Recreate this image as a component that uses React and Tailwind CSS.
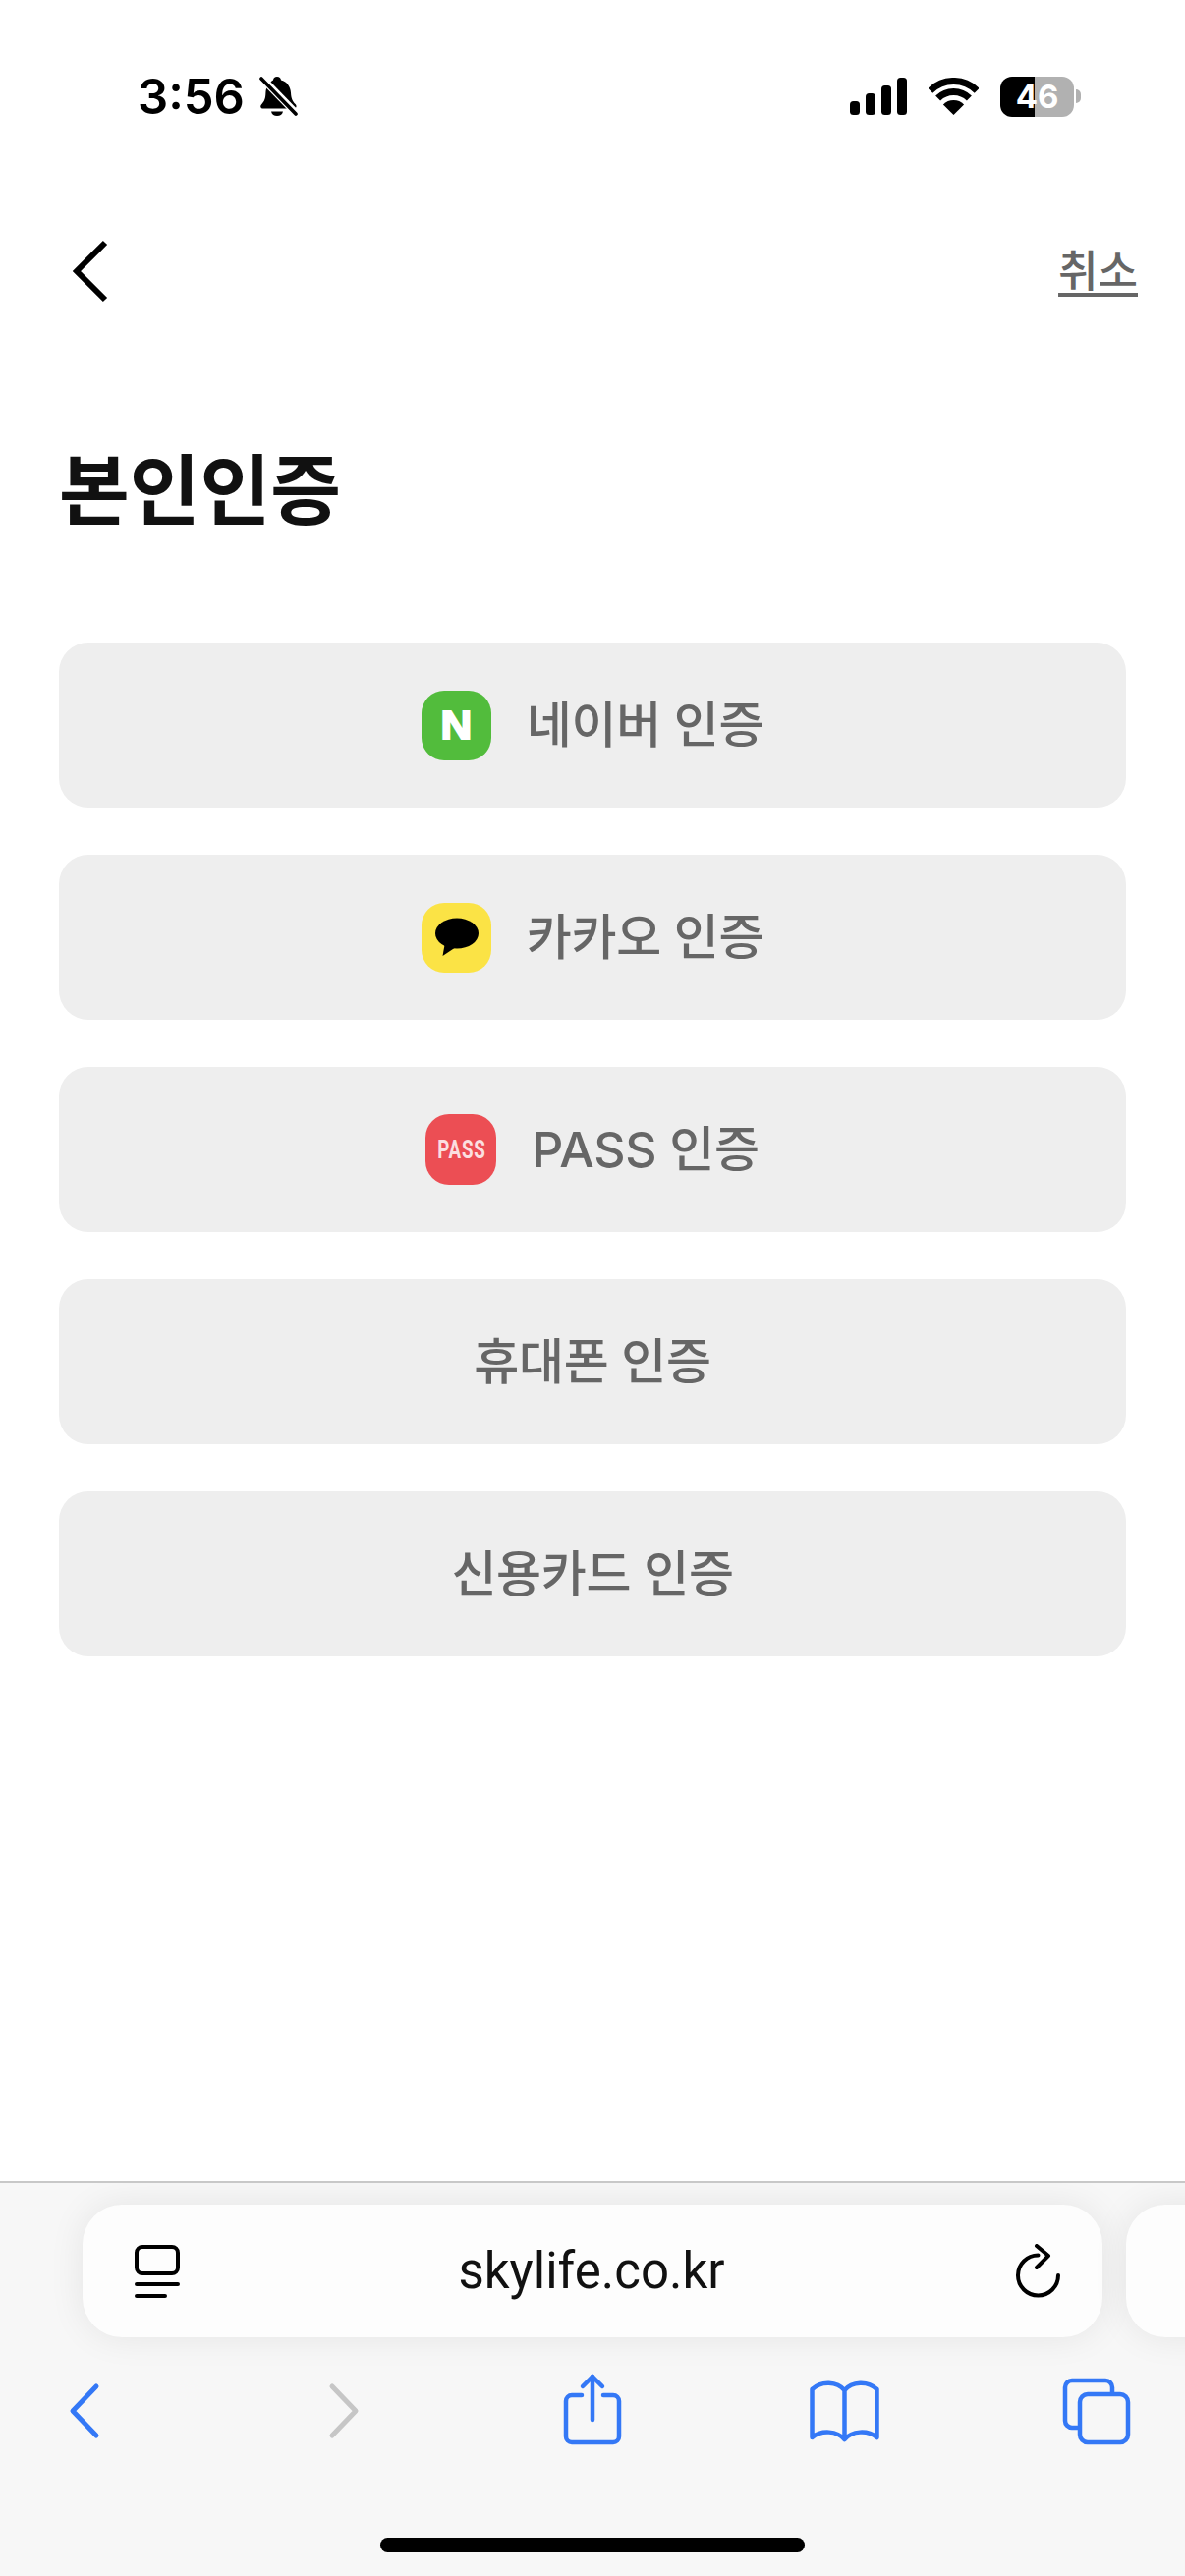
import React from 'react';

const FONT = 'font-["Inter","Noto_Sans_CJK_KR",sans-serif]';

function BellOff() {
  return (
    <svg width="40" height="42" viewBox="0 0 40 42">
      <path
        d="M18 1c2.400 0 3.800 1.600 4 3.400 6 1.600 9.600 6.400 10 13 .3 5.600 1.600 8.600 4.600 11.600 1.800 1.800 1 4.600-1.600 4.600H4c-2.800 0-3.600-2.600-1.800-4.400 3-3 4-6 4.200-11.400.1-2.800.6-5 1.700-7C9.800 8 12 5.600 14 4.400 14.200 2.600 15.600 1 18 1z"
        fill="#000"
      />
      <path d="M12 36.500h12c-.6 3-3 4.500-6 4.500s-5.400-1.500-6-4.500z" fill="#000" />
      <path d="M1 1l38 39" stroke="#fff" strokeWidth="7.500" />
      <path d="M2 3l35 36" stroke="#000" strokeWidth="3.600" strokeLinecap="round" />
    </svg>
  );
}

function Signal() {
  return (
    <svg width="58" height="38" viewBox="0 0 58 38" fill="#000">
      <rect x="0" y="24" width="10" height="14" rx="3.500" />
      <rect x="16" y="16" width="10" height="22" rx="3.500" />
      <rect x="32" y="8" width="10" height="30" rx="3.500" />
      <rect x="48" y="0" width="10" height="38" rx="3.500" />
    </svg>
  );
}

function Wifi() {
  return (
    <svg width="51" height="38" viewBox="0 0 51 38" fill="none" stroke="#000" strokeWidth="7">
      <path d="M1.800 13.300A33.500 33.500 0 0 1 49.200 13.300" />
      <path d="M9.600 21.100A22.500 22.500 0 0 1 41.400 21.100" />
      <path d="M25.500 38L14.900 27.400A15 15 0 0 1 36.100 27.400Z" fill="#000" stroke="none" />
    </svg>
  );
}

function StatusBar() {
  return (
    <div className="flex h-[196px] items-center justify-between pl-[140px] pr-[106px]">
      <div className="flex items-center gap-[15px]">
        <span className="text-[49px] leading-none font-semibold text-black">3:56</span>
        <BellOff />
      </div>
      <div className="flex items-center">
        <Signal />
        <div className="ml-[22px]">
          <Wifi />
        </div>
        <div className="ml-[22px] flex h-[41px] w-[75px] items-center justify-center rounded-[12px] bg-[linear-gradient(90deg,#000_47%,#b1b1b1_47%)] text-[33px] leading-none font-bold text-white">
          46
        </div>
        <div className="ml-[2px] h-[14px] w-[5px] rounded-r-full bg-[#b1b1b1]" />
      </div>
    </div>
  );
}

function NaverLogo() {
  return (
    <div className="flex h-[71px] w-[71px] items-center justify-center rounded-[23px] bg-[#52bc3c]">
      <span className="scale-x-110 font-['Liberation_Sans',sans-serif] text-[40px] leading-none font-bold text-white [-webkit-text-stroke:2px_white]">
        N
      </span>
    </div>
  );
}

function KakaoLogo() {
  return (
    <svg width="71" height="71" viewBox="0 0 71 71">
      <rect width="71" height="71" rx="23" fill="#fbe345" />
      <ellipse cx="36" cy="31" rx="22" ry="15.500" fill="#000" />
      <path d="M24 40L21.500 54L35 45Z" fill="#000" />
    </svg>
  );
}

function PassLogo() {
  return (
    <div className="flex h-[72px] w-[72px] items-center justify-center rounded-[24px] bg-[#ec4e54]">
      <span className="scale-x-75 font-['Roboto',sans-serif] text-[25px] leading-none font-bold tracking-[1px] text-[#fbdfe0]">
        PASS
      </span>
    </div>
  );
}

function AuthButton({ logo, label }) {
  return (
    <button className="flex h-[168px] w-full items-center justify-center gap-[36px] rounded-[30px] bg-[#eeeeee]">
      {logo}
      <span className="text-[50px] leading-none font-medium tracking-[-0.3px] text-[#666666]">{label}</span>
    </button>
  );
}

function Toolbar() {
  const blue = '#3478f6';
  return (
    <div className="mt-[35px] flex h-[80px] justify-between pl-[46px] pr-[50px]">
      <svg width="80" height="80" viewBox="0 0 80 80" fill="none" stroke={blue} strokeWidth="5" strokeLinecap="round" strokeLinejoin="round">
        <path d="M52 15L28 40L52 65" />
      </svg>
      <svg width="80" height="80" viewBox="0 0 80 80" fill="none" stroke="#c6c6c6" strokeWidth="5" strokeLinecap="round" strokeLinejoin="round">
        <path d="M34 15L58 40L34 65" />
      </svg>
      <svg width="80" height="80" viewBox="0 0 80 80" fill="none" stroke={blue} strokeWidth="4.500" strokeLinecap="round" strokeLinejoin="round">
        <path d="M31 24H21a6 6 0 0 0-6 6V66a6 6 0 0 0 6 6H63a6 6 0 0 0 6-6V30a6 6 0 0 0-6-6H53" />
        <path d="M42 5V49" />
        <path d="M32 15L42 5L52 15" />
      </svg>
      <svg width="80" height="80" viewBox="0 0 80 80" fill="none" stroke={blue} strokeWidth="4.500" strokeLinecap="round" strokeLinejoin="round">
        <path d="M40.500 19C33 10 17 9 7.500 18V67C17 59 33 60 40.500 69C48 60 64 59 73.500 67V18C64 9 48 10 40.500 19V69" />
      </svg>
      <svg width="80" height="80" viewBox="0 0 80 80" fill="none" stroke={blue} strokeWidth="4.500" strokeLinecap="round" strokeLinejoin="round">
        <path d="M22 57H15a7 7 0 0 1-7-7V16a7 7 0 0 1 7-7H49a7 7 0 0 1 7 7V22" />
        <rect x="23" y="23" width="49" height="49" rx="8" />
      </svg>
    </div>
  );
}

function SafariBar() {
  return (
    <div className="flex h-[402px] flex-col overflow-hidden border-t-2 border-[#c8c8c8] bg-[#f7f7f7]">
      <div className="mt-[22px] flex gap-[24px] pl-[84px]">
        <div className="flex h-[135px] w-[1038px] shrink-0 items-center justify-between rounded-[40px] bg-[#fdfdfd] pl-[52px] pr-[42px] shadow-[0_0_36px_rgba(0,0,0,0.08)]">
          <svg width="48" height="56" viewBox="0 0 48 56" fill="none" stroke="#000" strokeWidth="4" strokeLinecap="round">
            <rect x="3" y="3" width="42" height="27" rx="6" />
            <path d="M3 41H45" />
            <path d="M3 53H32" />
          </svg>
          <span className="mr-[12px] font-['Roboto',sans-serif] text-[51px] leading-none text-[#111]">skylife.co.kr</span>
          <svg width="48" height="56" viewBox="0 0 48 56" fill="none" stroke="#000" strokeWidth="4" strokeLinecap="round" strokeLinejoin="round">
            <path d="M45 32A20.500 20.500 0 1 1 24.500 11.500" />
            <path d="M23 2L35 12L23 24" />
          </svg>
        </div>
        <div className="h-[135px] w-[200px] shrink-0 rounded-[40px] bg-[#fdfdfd] shadow-[0_0_36px_rgba(0,0,0,0.08)]" />
      </div>
      <Toolbar />
      <div className="mt-auto mb-[24px] h-[15px] w-[432px] self-center rounded-full bg-black" />
    </div>
  );
}

export default function App() {
  return (
    <div className={`${FONT} flex h-[2622px] w-[1206px] flex-col overflow-hidden bg-white`}>
      <StatusBar />
      <div className="flex h-[160px] items-center justify-between pl-[72px] pr-[48px]">
        <svg width="40" height="66" viewBox="0 0 40 66" fill="none" stroke="#000" strokeWidth="6">
          <path d="M35 4L6 33L35 62" />
        </svg>
        <span className="text-[44px] leading-none font-medium text-[#666666] underline underline-offset-[6px]">취소</span>
      </div>
      <div className="flex h-[298px] items-center pb-[10px] pl-[60px]">
        <h1 className="text-[78px] leading-none font-semibold text-[#111111]">본인인증</h1>
      </div>
      <div className="flex flex-1 flex-col gap-[48px] px-[60px]">
        <AuthButton logo={<NaverLogo />} label="네이버 인증" />
        <AuthButton logo={<KakaoLogo />} label="카카오 인증" />
        <AuthButton logo={<PassLogo />} label="PASS 인증" />
        <AuthButton label="휴대폰 인증" />
        <AuthButton label="신용카드 인증" />
      </div>
      <SafariBar />
    </div>
  );
}
